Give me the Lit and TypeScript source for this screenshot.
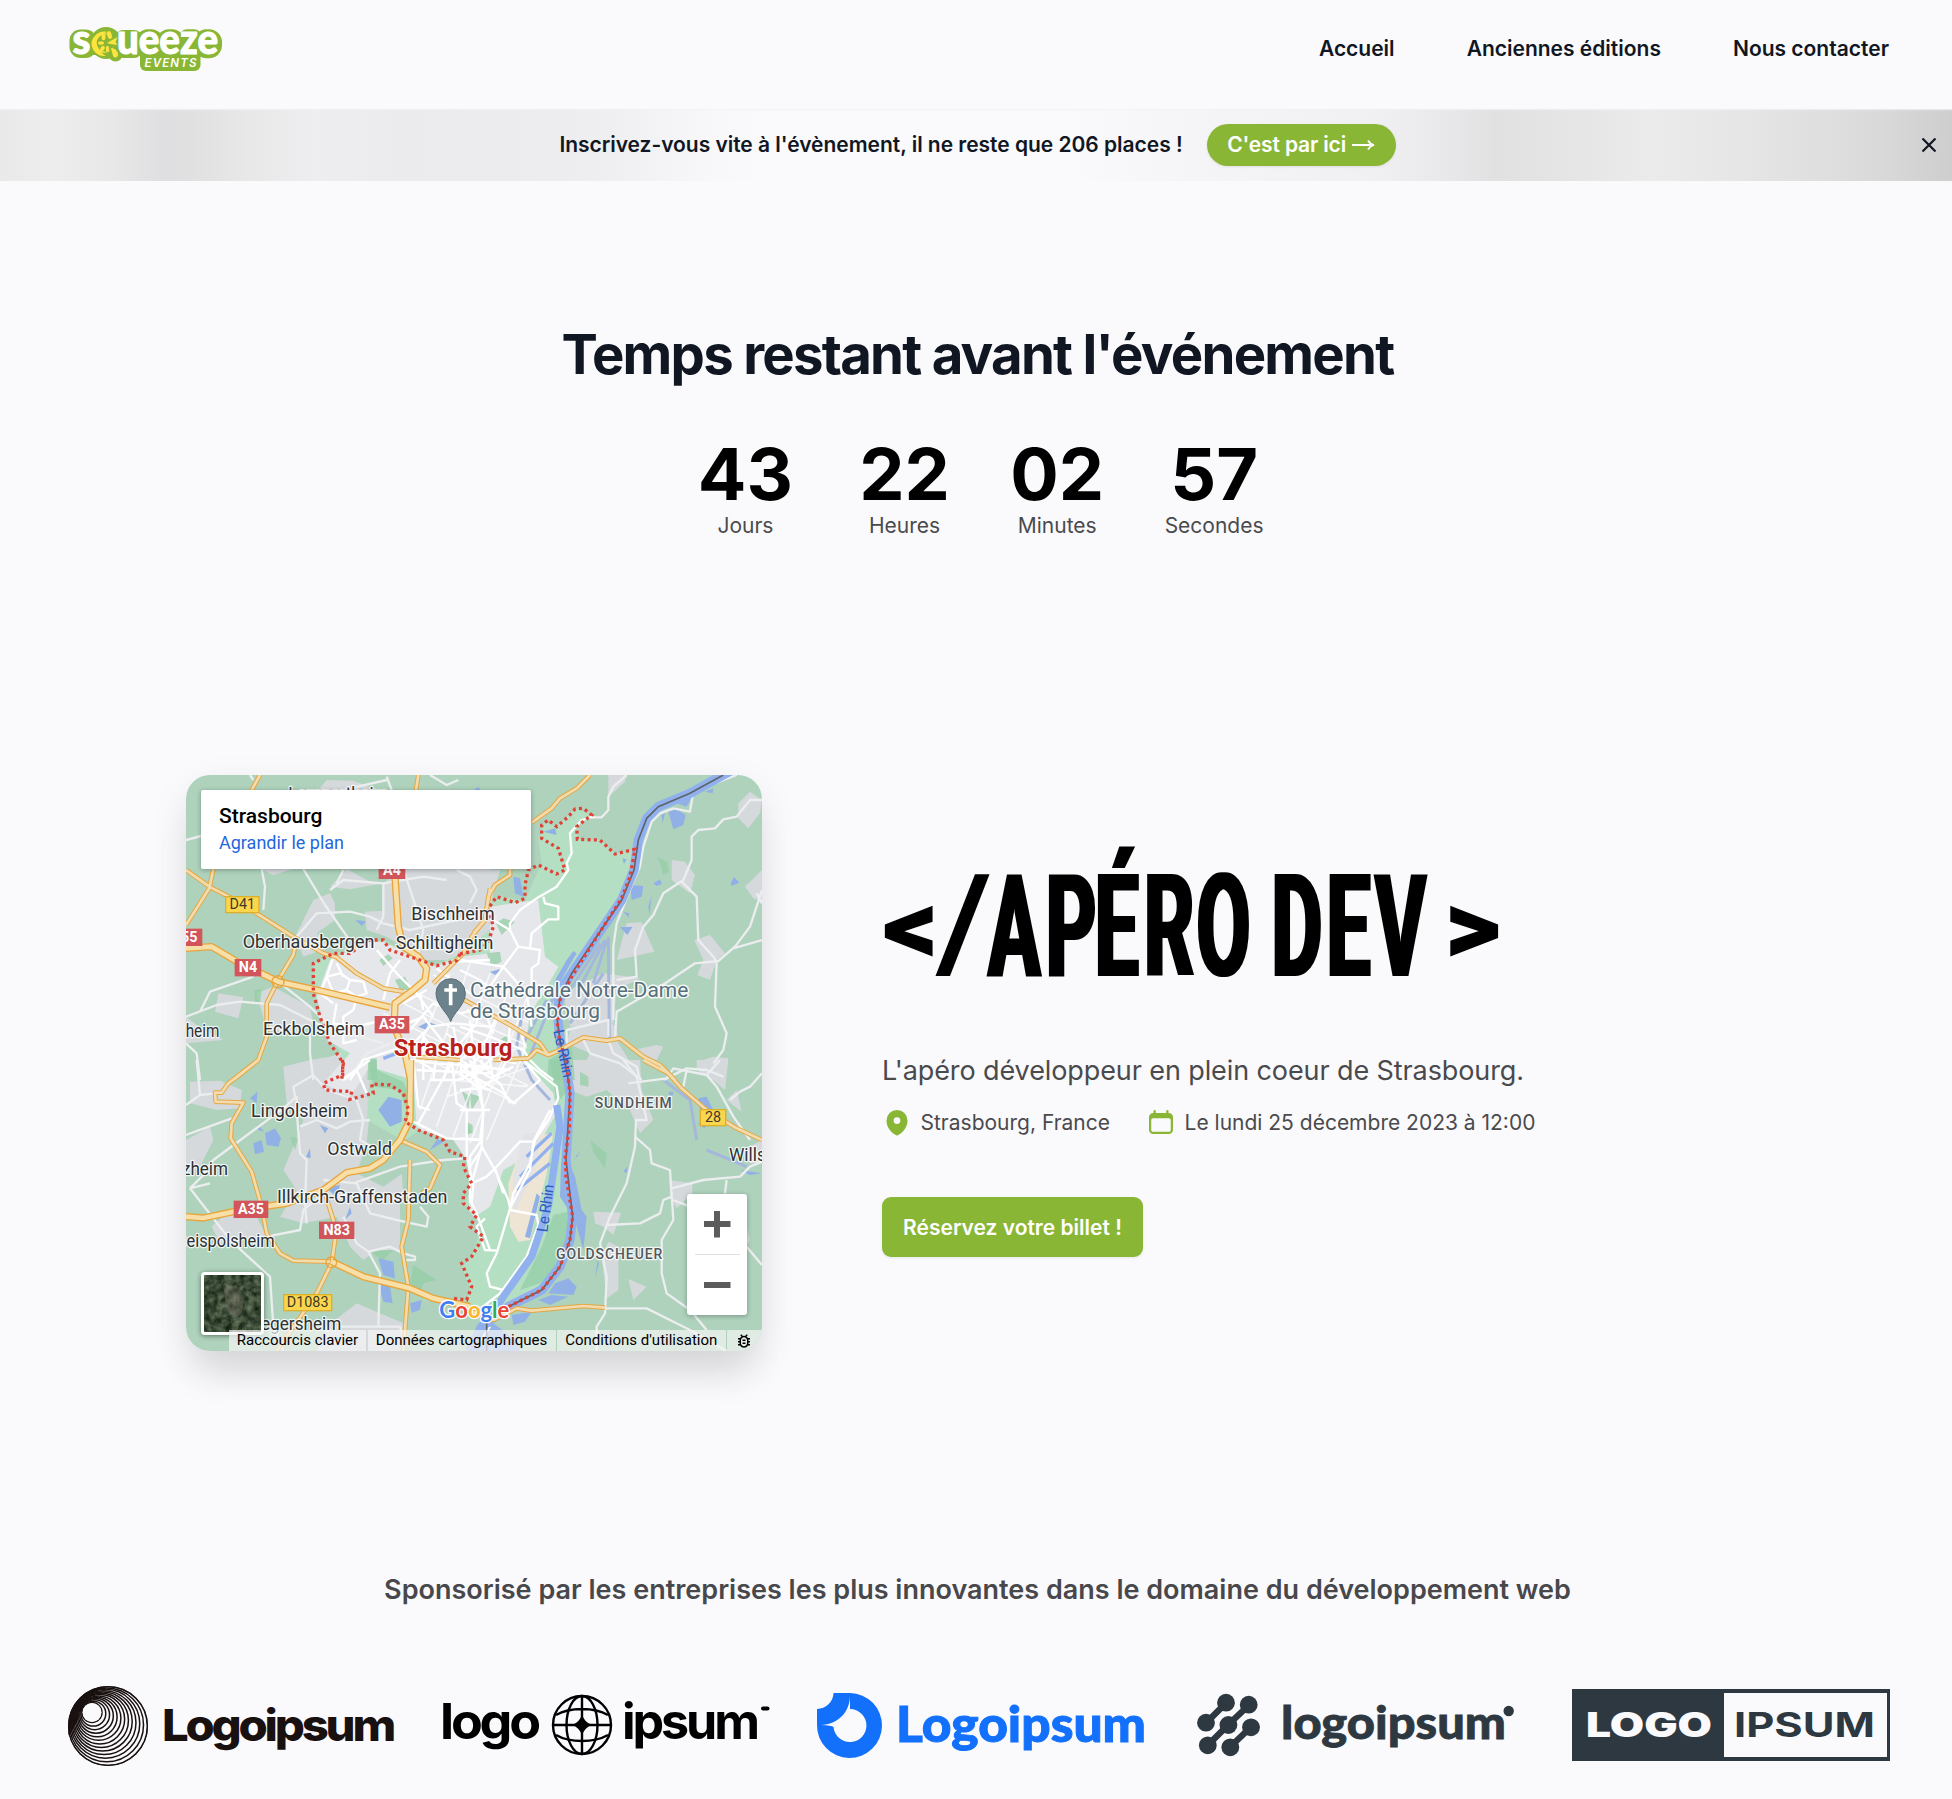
import { LitElement, html, svg, css } from "lit";
import { customElement } from "lit/decorators.js";

type Quad = [string, string, string, string];

const paths = (cls: string, [tl, tr, bl, br]: Quad) => svg`
  <path class=${cls} d=${tl}></path>
  <path class=${cls} transform="translate(870 0)" d=${tr}></path>
  <path class=${cls} transform="translate(0 900)" d=${bl}></path>
  <path class=${cls} transform="translate(870 900)" d=${br}></path>`;

const TOWN: Quad = [
  "M640,370L700,327L960,327L960,560L860,600L770,600L700,560L650,530L590,510L585,455L640,452Z M375,530L430,420L480,400L495,430L495,480L440,520L480,560L400,590Z M480,380L530,327L600,365L640,370L540,388Z M270,327L370,327L310,345Z M440,95L470,60L550,62L620,90Z M48,770L80,795L160,840L48,850Z M260,700L310,680L420,740L430,790L390,820L290,810Z M145,700L220,712L205,775L135,755Z M380,960L420,900L480,890L560,860L620,850L720,880L720,960Z",
  "M0,327L120,330L100,400L75,520L0,590Z M635,300L675,305L705,345L690,400L635,360Z M835,130L870,95L906,120L900,160L865,205L835,175Z M855,380L906,330L906,425L880,415Z M470,600L500,490L545,487L583,575Z M703,540L750,525L795,580L770,600L750,660L712,645L730,600Z M445,45L500,45L495,65L445,110Z M330,810L440,780L470,800L475,850L545,960L350,960L390,880L320,850Z M710,905L760,890L805,895L790,955L740,940Z M520,870L590,855L610,860L590,900L550,890Z M310,700L430,640L540,655L470,690L460,790L330,800Z",
  "M340,20L420,0L720,0L720,100L640,80L600,150L590,250L560,340L640,380L770,290L780,310L720,360L690,420L690,570L620,570L580,600L540,560L500,470L400,490L330,470L380,390L340,330L370,260L400,180L350,130Z M60,65L150,62L215,90L210,145L140,150L60,130Z M48,240L120,200L130,240L90,320L48,340Z M125,500L180,450L260,470L290,530L150,550Z M470,800L560,730L700,790L690,873L440,873Z",
  "M290,0L540,0L545,90L580,180L540,220L510,150L440,90L380,110L330,90Z M710,0L805,0L795,90L760,60L740,50L710,30Z M830,90L845,155L800,120Z M628,360L697,370L697,400L650,445L630,410Z M400,455L484,458L460,525L430,500L405,490Z M445,545L475,560L475,690L440,715L425,590Z M505,657L560,680L520,720Z M850,270L906,240L906,310L870,310Z M860,500L870,540L860,560Z",
];

const WOODS: Quad = [
  "M628,600L655,583L668,595L640,618Z M675,660L705,650L725,690L690,690Z M595,895L620,895L622,960L592,960Z M253,690L275,688L270,735L255,730Z",
  "M592,290L620,305L628,335L608,345L604,320Z M108,490L130,475L165,485L125,525Z M80,580L120,575L125,605L95,620Z M265,900L335,860L345,960L262,960Z M120,840L140,825L150,850L125,855Z",
  "M595,0L620,0L620,30L700,65L720,110L705,140L690,90L610,80Z M730,615L800,660L760,670L750,710L720,670Z M600,575L670,570L640,600Z M360,230L385,235L375,270Z M875,92L900,110L895,150Z M890,185L905,220L890,225Z",
  "M270,0L320,0L325,90L290,130Z M280,465L325,455L325,540L300,620L240,670L180,690L245,560Z M390,240L440,280L435,325L400,275Z M360,35L385,50L385,80L360,75Z M30,100L60,110L35,150Z M20,185L38,195L38,220L20,215Z",
];

const WATER: Quad = [
  "M555,480L588,484L575,497Z M745,800L775,785L800,795L770,810Z M905,95L925,80L935,95Z",
  "M625,155L650,148L677,165L670,195L640,208Z M510,375L550,378L545,410L515,420Z M580,370L600,358L605,372L590,378Z M812,370L822,350L838,368L815,378Z M487,295L500,298L492,312Z M480,502L518,500L502,525Z M575,405L568,465L565,440Z M160,350L180,355L190,410L165,400Z M90,635L130,625L105,645Z M250,215L285,205L290,225Z M665,110L710,85L680,140L650,130Z M735,95L760,85L758,100Z M320,600L340,573L350,580L300,665L280,670Z M490,455L508,460L505,472Z M605,165L615,160L608,190Z",
  "M625,150L655,110L695,120L695,185L660,200Z M285,220L315,205L333,235L325,260L290,255Z M250,250L275,240L282,275L255,283Z M240,115L262,95L260,130Z M450,195L475,205L465,220Z M408,290L420,265L422,295Z M625,595L670,605L675,655L640,645Z M625,665L660,680L668,730L640,725Z M720,730L755,720L750,750L725,758Z M780,270L800,240L830,240Z M262,190L282,215L265,210Z M480,380L510,375L500,410L475,390Z M540,440L545,460L525,480Z",
  "M715,115L740,110L760,150L720,150Z M712,190L740,190L735,205Z M628,95L640,95L638,107L626,105Z M285,670L325,655L350,680L340,705L265,700Z M235,720L275,705L325,710L270,735Z M155,765L215,755L195,785L160,795Z M303,310L315,280L345,350L365,450L380,470L370,570L345,480L300,410Z M405,655L413,600L417,610Z M345,292L360,275L352,290Z M490,335L503,318L500,338Z M100,790L180,850L180,873L30,873L60,790Z M195,530L230,400L240,410L210,535Z M840,330L906,340L870,345Z",
];

const MINOR: Quad = [
  "M48,240L93,228 M240,45L250,60 M275,327L285,380L280,450 M400,327L465,435L535,535 M380,530L440,460L540,455L600,470L640,490 M640,370L520,360L480,390 M640,370L640,470L620,510 M48,770L140,735L210,725L330,735L440,790L640,850 M90,755L120,695L250,650 M325,665L420,740L480,800L560,830 M48,850L80,880L90,960 M420,800L420,880L430,960 M530,960L590,880L660,850 M640,370L760,350L830,360 M640,490L720,510L860,480L960,460 M860,330L900,350L920,390L900,430 M700,327L760,510L740,600 M520,330L500,370 M650,60L540,85 M650,50L665,90 M865,60L830,75L780,45",
  "M500,45L460,80L445,110L445,150L425,172L395,172 M830,45L700,95L690,155L640,145L600,160L575,185L550,260L540,320L510,390L470,490L460,560L460,780 M906,120L870,120L830,170L790,178L765,205L715,210L695,230L695,300L670,360L610,400L580,465L550,500L525,570L530,650L470,660 M665,365L710,410L715,540L760,590L770,605L765,740L800,820L790,870L760,910 M906,390L870,500L825,560L775,603L705,610L600,680L470,755L465,830 M820,565L906,540 M445,830L445,780L320,810L320,860 M445,840L460,880L530,920L540,960 M370,840L390,880L480,910L545,960 M610,960L680,925L740,930L790,950 M906,430L890,400",
  "M80,0L90,105L135,100 M48,135L90,105 M48,225L185,175 M60,385L100,345L130,300L340,145L380,110L380,150L390,280L410,300L405,430L410,490 M370,80L430,45L470,90L560,120L580,180L570,240L640,280 M370,80L375,110 M390,200L440,180L500,205L540,185L600,180 M60,385L180,540L300,650L310,800L340,873 M290,530L390,510L400,450L430,425 M460,360L560,370L600,460L680,480L770,500L775,470L750,440 M520,470L560,550L595,575L630,640L625,800 M595,575L660,560L700,580L735,590L735,600L700,600 M550,370L690,320L820,300L890,295 M500,800L690,800L705,850 M60,385L120,370",
  "M490,0L530,50L560,180L528,180L525,260L500,370L450,470L420,550L440,650L435,760L410,800L410,873 M505,70L620,55L640,25L740,45L770,80L820,170L870,240 M740,45L780,0 M810,120L840,95L870,80L906,40 M680,30L670,80 M525,230L570,270L575,310L630,330L640,480L605,540L605,640L620,700L690,750L740,810 M635,385L730,360L840,350L870,320L906,305 M440,495L540,490L600,460L610,420L635,410 M435,745L560,745L690,810L800,873 M800,360L795,400 M860,560L906,615 M690,750L700,700 M690,440L640,420",
];

const STREETS: Quad = [
  "M490,590L470,650L450,700L490,730 M470,650L510,640L540,660L530,690L490,700L470,650 M540,660L580,665L590,700L560,710L530,690 M500,610L520,650 M560,710L550,750L520,770L520,850L560,840 M500,730L490,790L560,800L640,780 M620,570L680,640L740,700L790,770 M640,720L660,640L690,600 M800,625L900,700 M855,605L960,600 M720,810L790,730L870,760L960,740 M720,860L780,800L850,790L960,800 M690,800L760,770L830,860 M760,960L760,830L800,880L790,960 M820,960L850,860L960,850 M720,900L800,910L960,920 M850,800L880,960 M900,780L920,960 M750,700L760,750 M540,960L580,900L700,860 M740,930L960,940 M700,730L770,690 M830,820L900,880L960,890",
  "M400,170L365,180L330,220L335,280L320,310L325,330L290,380L230,415L180,450L150,490L150,510L175,560L240,570L235,610L215,625L215,710 M250,410L255,430L295,440L295,478L265,478L215,520L210,565 M150,510L100,480 M0,600L130,620L200,700L215,800 M175,560L130,620L90,680 M0,630L60,660L110,700 M60,740L50,790L0,850 M110,770L80,840L0,900 M150,800L140,900L110,960 M0,800L90,830L190,870L210,900L240,930L280,960 M0,940L60,890L170,910 M20,750L80,770L100,820 M30,960L90,900L160,850 M180,800L195,860",
  "M515,60L600,0 M730,0L745,140L780,150 M745,190L850,0 M730,185L830,235L930,240 M845,0L860,130L890,150L960,150 M780,60L860,60L960,20 M890,150L890,290L910,370L905,430L920,460L960,570 M930,240L940,160L930,70L860,0 M940,260L900,320 M520,60L560,30L590,100 M740,0L790,30 M870,40L920,80L960,90",
  "M0,30L60,60L130,100L160,130L240,60L190,0 M0,90L60,85L100,60L90,0 M30,0L50,70L70,150L65,260L105,330L145,420L150,445L110,580L80,640L90,680L130,690 M0,150L70,150 M0,235L65,240L30,290L30,430 M65,260L35,370L80,350L105,325L180,245L220,245L270,150 M105,325L130,400 M220,245L210,330L150,445 M190,0L290,80L295,115L265,180L225,240L210,310L160,400L150,450L230,465L235,495L200,590L120,700L30,770 M40,873L90,800 M75,475L50,500L75,570L110,572 M0,0L120,70L150,130 M0,60L60,20L150,30 M60,0L100,50L160,20",
];

const ROADS: Quad = [
  "M270,45L245,90 M130,327L118,385L48,495 M48,330L118,380L180,412L260,460L370,530L460,580L500,592L560,640L640,685L700,695 M375,560L370,585L325,660L290,730L290,830L265,900L190,960 M745,45L738,90 M960,385L945,480L905,530L880,580L790,670 M740,890L870,900",
  "M150,327L150,345L105,375L85,410L75,480L40,520 M390,45L350,85L300,115L275,145L215,188 M10,718L150,795L240,850L265,885L230,870L205,895L100,900 M265,885L300,870L370,832L440,842L480,835L550,890L600,915L645,960",
  "M265,0L175,70L155,98L135,98L137,125L220,128L185,190L182,235L245,335L275,440L290,520L330,580L370,602L480,605 M460,385L490,480L495,540L485,610L440,700L320,873 M690,240L770,275L810,315L780,385L755,400 M720,300L715,480L695,560L715,680L700,873",
  "M550,0L625,40L665,85L740,150L830,205L906,240 M0,740L100,780L170,745L215,752L370,738L435,743",
];

const MOTORWAYS: Quad = [
  "M48,565L125,560L210,610L325,665L440,690L660,742 M675,350L685,500L700,560L745,590L770,625L765,660L730,690L675,730L672,800L705,880L722,960",
  "",
  "M722,0L720,180L690,240L640,300L600,325L530,338L460,390L350,430L245,445L190,455L100,474L48,470 M485,605L580,650L720,685L790,715L900,740",
  "",
];

const BORDER: Quad = [
  "M870,582L860,602L800,617L720,590L660,570L640,540L600,540L540,580L490,580L430,610L430,700L450,770L480,850L520,910L515,960",
  "M0,582L60,570L85,545L100,500L85,445L110,410L165,428L195,415L195,375L205,330L235,315L290,342L315,330L295,265L245,235L245,195L265,180L290,200L325,170L345,147L370,145L395,165L350,200L352,238L420,240L465,282L525,268L510,350L485,415L430,500L335,650L300,720L292,790L300,850L320,900L325,960",
  "M518,0L518,45L460,70L465,90L545,95L540,118L610,100L605,72L660,75L700,100L715,150L705,185L745,210L820,240L840,275L885,290L880,320L905,370L880,400L880,430L920,465L900,500L940,530L905,590L875,610L905,680L890,720L850,715",
  "M325,60L330,100L328,200L316,290L318,350L338,470L330,540L300,620L245,690L145,740",
];

const label = (x: number, y: number, w: number, text: string, cls = "town-name") =>
  svg`<text class=${cls} x=${x} y=${y} textLength=${w} lengthAdjust="spacingAndGlyphs">${text}</text>`;

const shield = (x: number, y: number, w: number, text: string, kind: string) => svg`
  <rect class=${"shield " + kind} x=${x} y=${y} width=${w} height="48"></rect>
  <text class=${"shield-text " + kind} x=${x + w / 2} y=${y + 38}>${text}</text>`;

@customElement("event-map")
class EventMap extends LitElement {
  static styles = css`
    :host { display: block; }
    .map { position: relative; width: 576px; height: 576px; border-radius: 24px; font-family: Roboto, sans-serif;
      box-shadow: 0 30px 38px -8px rgba(0,0,0,.1), 0 12px 40px rgba(0,0,0,.07); }
    .clip { position: absolute; inset: 0; border-radius: 24px; overflow: hidden; background: #aed2bc; }
    svg { display: block; }
    .town { fill: #d5d9dc; }
    .woods { fill: #94cea7; opacity: .75; }
    .water { fill: #91b1e6; }
    .minor { fill: none; stroke: #ebedef; stroke-width: 7; stroke-linejoin: round; }
    .street { fill: none; stroke: #fff; stroke-width: 7; stroke-linejoin: round; }
    .case { fill: none; stroke: #e5a742; stroke-width: 14; stroke-linejoin: round; }
    .road { fill: none; stroke: #f2dcae; stroke-width: 8; stroke-linejoin: round; }
    .mcase { fill: none; stroke: #e8a53b; stroke-width: 22; stroke-linejoin: round; }
    .motor { fill: none; stroke: #f8dfa8; stroke-width: 14; stroke-linejoin: round; }
    .border { fill: none; stroke: #df4338; stroke-width: 10; stroke-dasharray: 9 10; }
    .river { fill: none; stroke: #91b1ee; stroke-width: 28; stroke-linejoin: round; }
    .country { fill: none; stroke: #5e6469; stroke-width: 5; }
    .grid { fill: none; stroke: #fff; stroke-width: 5; opacity: .7; }
    text { font-family: Roboto, sans-serif; paint-order: stroke; stroke-linejoin: round; }
    .town-name { font-size: 55px; fill: #2d3134; stroke: rgba(255,255,255,.8); stroke-width: 8; }
    .big { font-size: 69px; font-weight: 700; fill: #b9211b; stroke: rgba(255,255,255,.9); stroke-width: 8; }
    .poi { font-size: 61px; fill: #566f7b; stroke: rgba(255,255,255,.9); stroke-width: 9; }
    .district { font-size: 44px; font-weight: 500; fill: #53585c; stroke: rgba(255,255,255,.85); stroke-width: 8; letter-spacing: 3px; }
    .rhin { font-size: 46px; fill: #2b5cc0; }
    .shield { stroke-width: 4; }
    .shield.red { fill: #d1555a; stroke: #d1555a; }
    .shield.yellow { fill: #fbd64c; stroke: #ddb02c; }
    .shield-text { font-size: 43px; text-anchor: middle; }
    .shield-text.red { fill: #fff; font-weight: 700; }
    .shield-text.yellow { fill: #3d3a2a; font-weight: 400; }
    .google { font-family: Lato, sans-serif; font-size: 70px; font-weight: 700; stroke: #fff; stroke-width: 8; }
    .b { fill: #3f7ff0; } .r { fill: #e84335; } .y { fill: #fbb428; } .g { fill: #35a853; }
    .card { position: absolute; left: 15px; top: 15px; width: 330px; height: 79px; box-sizing: border-box; padding: 13px 18px;
      background: #fff; border-radius: 2px; box-shadow: 0 1px 5px rgba(0,0,0,.3); }
    .place { font-size: 21px; line-height: 26px; font-weight: 500; color: #000; }
    .link { font-size: 18px; line-height: 27px; color: #1f67dc; }
    .zoom { position: absolute; left: 501px; top: 419px; width: 60px; height: 121px; background: #fff; border-radius: 3px;
      box-shadow: 0 1px 5px rgba(0,0,0,.3); }
    .thumb { position: absolute; left: 15px; top: 497px; width: 57px; height: 57px; border: 3px solid #fff; border-radius: 4px;
      overflow: hidden; box-shadow: 0 1px 5px rgba(0,0,0,.45); }
    .legal { position: absolute; left: 43px; right: 0; bottom: 0; height: 21px; display: flex; gap: 1.5px; font-size: 15px;
      line-height: 21px; color: #000; }
    .legal span { background: rgba(245,245,245,.7); display: flex; justify-content: center; align-items: center; white-space: nowrap; }
    .l1 { width: 137px; } .l2 { width: 188px; } .l3 { width: 168.5px; } .l4 { flex: 1; padding-right: 2px; }
  `;

  render() {
    return html`
      <div class="map"><div class="clip">
        <svg width="576" height="576" viewBox="48 45 1728 1728">
          <defs>
            <clipPath id="core"><path d="M620,740L700,700L830,620L960,600L1000,650L1080,720L1070,860L1110,920L1010,1080L940,1200L700,1080L720,900Z"></path></clipPath>
          </defs>
          ${paths("town", TOWN)}
          <path fill="#b4dfc2" d="M1115,310L1105,240L1125,185L1160,200L1215,145L1265,165L1225,200L1222,238L1290,240L1335,282L1395,268L1380,350L1300,500L1170,720L1165,800L1195,960L1200,1100L1188,1200L1208,1370L1190,1480L1110,1590L1010,1640L900,1640L760,1620L775,1580L745,1510L810,1430L770,1400L790,1370L750,1330L755,1190L715,1150L590,1080L600,940L520,900L430,700L430,610L490,580L640,540L790,617L870,582L970,500L955,445L980,410L1065,420Z"></path>
          <path fill="#e6e7eb" d="M480,600L600,545L640,545L790,620L870,590L960,580L960,440L1060,425L1105,420L1125,590L1165,620L1120,700L1080,760L1060,900L1150,1000L1160,1060L1090,1180L1000,1230L960,1340L900,1380L890,1210L740,1100L730,960L600,920L540,1010L460,970L540,880L470,840L440,710Z"></path>
          <path fill="#aed2bc" d="M750,1110L850,1140L890,1200L905,1290L880,1330L935,1400L905,1490L875,1520L905,1600L860,1640L720,1600L700,1320L690,1150Z"></path>
          <path fill="#eee5d5" d="M1150,1120L1060,1130L1040,1200L1015,1270L1020,1400L1045,1445L1080,1440L1110,1320L1130,1240Z"></path>
          <path fill="#e1e3e7" d="M1060,1125L1110,1115L1100,1210L1030,1370L1030,1250Z"></path>
          ${paths("woods", WOODS)}
          ${paths("water", WATER)}
          <g fill="none" stroke="#a5b8dc" stroke-width="9">
            <path d="M1305,540L1230,680 M1310,540L1270,670 M1290,550L1180,720 M1315,530L1318,840 M1300,640L1200,790 M1060,740L1040,860L1085,960L1140,1020 M1130,720L1060,850 M1155,700L1075,900 M1480,960L1560,1020L1580,1140 M1610,1170L1730,1220"></path>
          </g>
          <path fill="none" stroke="#91b1ee" stroke-width="10" d="M1145,1120L1070,1190 M1150,1150L1050,1250 M1140,1210L1040,1290 M640,895L680,880"></path>
          ${paths("minor", MINOR)}
          <g clip-path="url(#core)"><path class="grid" d="M640,700L1120,940 M640,760L1120,1000 M640,830L1080,1050 M700,680L1120,880 M780,640L1120,810 M690,1000L840,640 M750,1050L900,610 M800,1100L960,640 M850,1130L1030,650 M900,1150L1080,690 M950,1140L1110,760 M860,900L1080,860 M840,960L1080,980 M830,1010L1080,920"></path></g>
          ${paths("street", STREETS)}
          <path class="river" d="M1690,28L1560,100L1465,140L1430,175L1405,240L1392,330L1355,420L1300,500L1205,640L1170,690L1162,760L1170,840L1185,900L1200,1000L1188,1200L1208,1370L1200,1440L1170,1520L1115,1590L1015,1640L935,1700L900,1773"></path>
          <path fill="none" stroke="#91b1ee" stroke-width="22" stroke-linejoin="round" d="M1160,1035L1170,1100L1135,1340L1085,1490L1000,1610L950,1690"></path>
          <path class="country" d="M1660,45L1560,100L1465,140L1430,175L1405,240L1392,330L1355,420L1300,500L1205,640L1170,710L1162,780L1170,840L1195,960L1200,1000L1188,1200L1208,1370L1200,1440L1170,1520L1115,1590L1015,1640 M950,1690L950,1773"></path>
          ${paths("case", ROADS)}${paths("road", ROADS)}
          ${paths("mcase", MOTORWAYS)}${paths("motor", MOTORWAYS)}
          <path fill="none" stroke="#e8a53b" stroke-width="4" d="M306,665a18,18 0 1 0 36,0a18,18 0 1 0-36,0 M468,1507a16,16 0 1 0 32,0a16,16 0 1 0-32,0"></path>
          ${paths("border", BORDER)}
          ${label(355, 120, 300, "Lampertheim")}
          ${shield(628, 307, 76, "A4", "red")}
          ${shield(167, 410, 100, "D41", "yellow")}
          ${shield(20, 508, 75, "55", "red")}
          ${shield(196, 599, 76, "N4", "red")}
          ${shield(616, 770, 100, "A35", "red")}
          ${shield(193, 1324, 100, "A35", "red")}
          ${shield(449, 1387, 102, "N83", "red")}
          ${shield(341, 1604, 144, "D1083", "yellow")}
          ${shield(1591, 1049, 76, "28", "yellow")}
          ${label(724, 480, 250, "Bischheim")}
          ${label(218, 564, 395, "Oberhausbergen")}
          ${label(677, 568, 293, "Schiltigheim")}
          ${label(279, 824, 305, "Eckbolsheim")}
          ${label(-45, 831, 193, "Ittenheim")}
          ${label(243, 1071, 290, "Lingolsheim")}
          ${label(472, 1185, 194, "Ostwald")}
          ${label(-6, 1246, 180, "olzheim")}
          ${label(321, 1328, 511, "Illkirch-Graffenstaden")}
          ${label(16, 1460, 298, "Geispolsheim")}
          ${label(245, 1711, 269, "Fegersheim")}
          ${label(1677, 1202, 190, "Willstätt")}
          ${label(1274, 1043, 234, "SUNDHEIM", "district")}
          ${label(1158, 1496, 322, "GOLDSCHEUER", "district")}
          <text class="rhin" transform="translate(1150 812) rotate(78)" textLength="146">Le Rhin</text>
          <text class="rhin" transform="translate(1132 1418) rotate(-82)" textLength="144">Le Rhin</text>
          <path d="M842,785C835,760 798,735 798,700a44,44 0 0 1 88,0C886,735 849,760 842,785Z" fill="#6c828d" stroke="#566b75" stroke-width="3"></path>
          <path d="M842,672v64M823,690h38" stroke="#fff" stroke-width="11" fill="none"></path>
          ${label(900, 712, 655, "Cathédrale Notre-Dame", "poi")}
          ${label(900, 775, 390, "de Strasbourg", "poi")}
          ${label(671, 888, 356, "Strasbourg", "big")}
          <text class="google" x="808" y="1675" textLength="210" lengthAdjust="spacingAndGlyphs"><tspan class="b">G</tspan><tspan class="r">o</tspan><tspan class="y">o</tspan><tspan class="b">g</tspan><tspan class="g">l</tspan><tspan class="r">e</tspan></text>
        </svg>
        <div class="card"><div class="place">Strasbourg</div><div class="link">Agrandir le plan</div></div>
        <div class="thumb">
          <svg width="57" height="57" viewBox="0 0 57 57">
            <defs><filter id="t" x="0" y="0" width="1" height="1" color-interpolation-filters="sRGB"><feTurbulence type="fractalNoise" baseFrequency=".14" numOctaves="4" seed="4"></feTurbulence>
              <feColorMatrix values=".5 .2 0 0 -.12  .5 .2 0 0 -.06  .45 .15 0 0 -.09  0 0 0 0 1"></feColorMatrix></filter></defs>
            <rect width="57" height="57" filter="url(#t)"></rect>
            <path d="M20,14l12-4 8,12-2,16-8,6-8-12z" fill="#8a7d72" opacity=".35"></path>
          </svg>
        </div>
        <div class="zoom"><svg width="60" height="121" viewBox="0 0 60 121"><path d="M17,30h26.5M30,17v26.5M17,91h26.5" stroke="#5c5c5c" stroke-width="6"></path><path d="M8,60.5h45" stroke="#e2e2e2" stroke-width="1"></path></svg></div>
        <div class="legal"><span class="l1">Raccourcis clavier</span><span class="l2">Données cartographiques</span><span class="l3">Conditions d'utilisation</span><span class="l4">
          <svg width="18" height="18" viewBox="0 0 24 24"><path fill="#000" d="M20 8h-2.81a5.985 5.985 0 0 0-1.82-1.96L17 4.41 15.59 3l-2.17 2.17a6.002 6.002 0 0 0-2.83 0L8.41 3 7 4.41l1.62 1.63C7.88 6.55 7.26 7.22 6.81 8H4v2h2.09c-.05.33-.09.66-.09 1v1H4v2h2v1c0 .34.04.67.09 1H4v2h2.81c1.04 1.79 2.97 3 5.19 3s4.15-1.21 5.19-3H20v-2h-2.09c.05-.33.09-.66.09-1v-1h2v-2h-2v-1c0-.34-.04-.67-.09-1H20V8zm-4 7c0 2.21-1.79 4-4 4s-4-1.790-4-4v-4c0-2.210 1.790-4 4-4s4 1.790 4 4v4zm-6-1h4v2h-4zm0-4h4v2h-4z"></path></svg></span></div>
      </div></div>`;
  }
}

const NAV = ["Accueil", "Anciennes éditions", "Nous contacter"];
const COUNTDOWN = [
  { value: "43", unit: "Jours", cls: "c1" },
  { value: "22", unit: "Heures", cls: "c2" },
  { value: "02", unit: "Minutes", cls: "c3" },
  { value: "57", unit: "Secondes", cls: "c4" },
];

const RINGS = Array.from({ length: 13 }, (_, i) => {
  const t = i / 12;
  return { r: 10 + t * 29.3, x: 24 + t * 16, y: 26.5 + t * 13.5 };
});

@customElement("app-root")
class AppRoot extends LitElement {
  static styles = css`
    :host { display: block; width: 1952px; height: 1799px; overflow: hidden; background: #fafafd; font-family: Inter, sans-serif;
      color: #111722; }
    svg { display: block; overflow: visible; }
    header { display: flex; justify-content: space-between; height: 109px; box-sizing: border-box; padding: 24px 63px 0 66px; }
    nav { display: flex; gap: 72px; padding-top: 1px; }
    nav a { font-size: 21px; line-height: 48px; font-weight: 600; height: 48px; }
    .banner { position: relative; display: flex; align-items: center; justify-content: center; gap: 24px; height: 72px; padding-left: 3px;
      box-sizing: border-box;
      background: linear-gradient(180deg, rgba(240,240,242,.9) 0, rgba(240,240,242,0) 2px),
        linear-gradient(90deg, #e9e9ea 0, #ededee 50px, #e8e8e9 110px, #dfdfe1 165px, #e1e1e2 195px, #e8e8e9 250px, #eeeef0 315px, #ebebed 400px, #ececee 520px, #efeff1 610px, #f7f7f9 700px, #fafafc 770px, #fafafd 1060px, #f5f5f8 1200px, #f0f0f2 1380px, #e9e9eb 1440px, #e1e1e2 1495px, #e5e5e6 1570px, #ebebec 1650px, #e6e6e7 1740px, #dededf 1830px, #d9d9da 1880px, #cecece 1952px); }
    .banner p { margin: 0 0 1px; font-size: 21px; font-weight: 600; letter-spacing: -.03px; }
    .pill { width: 189px; height: 42px; box-sizing: border-box; padding-bottom: 1px; border-radius: 21px; background: #8ab636; color: #fff; font-size: 21px; font-weight: 600;
      display: flex; align-items: center; justify-content: center; gap: 6px; letter-spacing: -.15px; box-shadow: 0 1px 3px rgba(0,0,0,.08); white-space: nowrap; }
    .close { position: absolute; right: 15px; top: 28px; }
    .count { height: 594px; box-sizing: border-box; padding-top: 143px; text-align: center; }
    h2 { margin: 0; font-size: 54.5px; line-height: 60px; letter-spacing: -1.75px; font-weight: 700; padding-left: 3px; }
    .clock { display: flex; justify-content: center; gap: 62px; padding: 54px 0 0 4px; }
    .clock div { display: flex; flex-direction: column; align-items: center; }
    .c1 { width: 105px; } .c2 { width: 89.4px; } .c3 { width: 91.8px; } .c4 { width: 98px; }
    .clock b { font-size: 72px; line-height: 72px; font-weight: 700; color: #000; }
    .clock span { font-size: 21px; line-height: 32px; color: #4a4a4d; }
    .event { display: flex; align-items: flex-start; padding-left: 186px; gap: 120px; height: 783px; }
    .info { padding-top: 70px; color: #4a4a4d; }
    .desc { margin: 65px 0 0; font-size: 27px; line-height: 42px; white-space: nowrap; letter-spacing: -.1px; }
    .meta { display: flex; align-items: center; margin-top: 10px; height: 40px; font-size: 21px; }
    .meta svg { margin-right: 8.5px; }
    .meta span { margin-right: 36px; }
    .cta { margin-top: 55px; width: 261px; height: 60px; border-radius: 9px; background: #8ab636; color: #fff; font-size: 21px;
      font-weight: 600; display: flex; align-items: center; justify-content: center; box-shadow: 0 1px 3px rgba(0,0,0,.08); }
    h3 { margin: 0; padding-left: 3px; font-size: 27px; line-height: 42px; height: 43px; padding-top: 11px; font-weight: 600; text-align: center; color: #48484c; }
    .logos { display: flex; justify-content: space-between; padding: 74px 62px 0 68px; }
    .brand { font-family: Roboto, Inter, sans-serif; font-weight: 700; }
    .chevron { font-weight: 800; }
    .inter { font-family: Inter, sans-serif; }
    .tight { letter-spacing: -3px; }
    .lato { font-family: Lato, sans-serif; font-weight: 900; }
  `;

  render() {
    return html`
      <header>
        <svg width="160" height="52" viewBox="66 24 160 52">
          <g fill="#8ab636">
            <rect x="140" y="48" width="60.500" height="23" rx="6"></rect>
            <rect x="69.500" y="29.500" width="27" height="28.500" rx="11"></rect>
            <rect x="84" y="33" width="120" height="22"></rect>
            <circle cx="106" cy="43" r="16"></circle><circle cx="115.500" cy="54.500" r="7"></circle>
            <rect x="115" y="30" width="27" height="28" rx="8"></rect>
            <rect x="135" y="29.300" width="29" height="29" rx="13"></rect>
            <rect x="156" y="29.300" width="29" height="29" rx="13"></rect>
            <rect x="179" y="29.300" width="23" height="29" rx="8"></rect>
            <rect x="193.500" y="29.300" width="28.500" height="29" rx="13"></rect>
          </g>
          <g fill="#fff" stroke="#fff" stroke-width="1" stroke-linejoin="round" class="lato" font-size="41">
            <text x="72.500" y="54" textLength="18" lengthAdjust="spacingAndGlyphs">s</text>
            <text x="117" y="54" textLength="101" lengthAdjust="spacingAndGlyphs">ueeze</text>
          </g>
          <path d="M107,32C99,30 96,35 93,38L91.500,42C91,50 97,57 106,56C101,53 97,48 98,42C98,37 102,34 107,32Z" fill="#fde33f"></path>
          <circle cx="104" cy="43" r="10" fill="#fde33f"></circle>
          <circle cx="105.500" cy="43" r="8.800" fill="#8ab636"></circle>
          <g fill="#fde33f"><ellipse cx="103.500" cy="37" rx="2" ry="3.300"></ellipse><ellipse cx="109.500" cy="35" rx="2.200" ry="4" transform="rotate(-15 109.500 35)"></ellipse><ellipse cx="101" cy="43" rx="3" ry="1.800"></ellipse><ellipse cx="102.500" cy="48.500" rx="2" ry="2.800" transform="rotate(30 102.500 48.500)"></ellipse><ellipse cx="107.500" cy="49" rx="1.700" ry="3"></ellipse><path d="M107,43L117.500,37L115.500,42L117.500,45L110,44Z"></path><path d="M111,48C114,48 117,50 118,54C118.500,57 115,59 113,56Z"></path></g>
          <text x="144.500" y="67" class="inter" font-size="11.500" font-weight="600" font-style="italic" fill="#fff" textLength="52">EVENTS</text>
        </svg>
        <nav>${NAV.map((n) => html`<a>${n}</a>`)}</nav>
      </header>
      <div class="banner">
        <p>Inscrivez-vous vite à l'évènement, il ne reste que 206 places !</p>
        <a class="pill">C'est par ici<svg width="23" height="12" viewBox="0 0 23 12"><path d="M0,6H21M16,1.500Q18,5 22,6Q18,7 16,10.500" fill="none" stroke="#fff" stroke-width="1.800"></path></svg></a>
        <svg class="close" width="16" height="16" viewBox="0 0 16 16"><path d="M1.500,1.500L14.500,14.500M14.500,1.500L1.500,14.500" stroke="#111722" stroke-width="2.200"></path></svg>
      </div>
      <section class="count">
        <h2>Temps restant avant l'événement</h2>
        <div class="clock">${COUNTDOWN.map((c) => html`<div class=${c.cls}><b>${c.value}</b><span>${c.unit}</span></div>`)}</div>
      </section>
      <section class="event">
        <event-map></event-map>
        <div class="info">
          <svg width="640" height="140" viewBox="882 845 640 140">
            <defs><filter id="wide" x="-5%" y="-5%" width="110%" height="110%"><feMorphology operator="dilate" radius="2 0"></feMorphology></filter></defs>
            <g fill="#000">
              <g class="brand chevron" font-size="104" stroke="#000" stroke-width="1.500">
                <text transform="translate(883 962) scale(1.04 .98)">&lt;</text>
                <text transform="translate(1445 962) scale(1.04 .98)">&gt;</text>
              </g>
              <path d="M935.500,976L975,874.300H989.500L950,976Z"></path>
              <g class="brand" font-size="143.500" filter="url(#wide)">
                <text transform="translate(0 976) scale(.54 1)" x="1830 1937 2028 2119 2216">APÉRO</text>
                <text transform="translate(0 976) scale(.54 1)" x="2355 2457 2547">DEV</text>
              </g>
            </g>
          </svg>
          <p class="desc">L'apéro développeur en plein coeur de Strasbourg.</p>
          <div class="meta">
            <svg width="30" height="30" viewBox="0 0 20 20"><path fill="#8ab636" fill-rule="evenodd" d="M9.690 18.933l.003.001C9.890 19.020 10 19 10 19s.110.020.308-.066l.002-.001.006-.003.018-.008a5.741 5.741 0 00.281-.140c.186-.096.446-.240.757-.433.620-.384 1.445-.966 2.274-1.765C15.302 14.988 17 12.493 17 9A7 7 0 103 9c0 3.492 1.698 5.988 3.355 7.584a13.731 13.731 0 002.273 1.765 11.842 11.842 0 00.976.544l.062.029.018.008.006.003zM10 11.250a2.250 2.250 0 100-4.500 2.250 2.250 0 000 4.500z"></path></svg>
            <span>Strasbourg, France</span>
            <svg width="30" height="30" viewBox="0 0 20 20"><path fill="#8ab636" fill-rule="evenodd" d="M5.750 2a.750.750 0 01.750.750V4h7V2.750a.750.750 0 011.500 0V4h.250A2.750 2.750 0 0118 6.750v8.500A2.750 2.750 0 0115.250 18H4.750A2.750 2.750 0 012 15.250v-8.500A2.750 2.750 0 014.750 4H5V2.750A.750.750 0 015.750 2zm-1 5.500c-.690 0-1.250.560-1.250 1.250v6.500c0 .690.560 1.250 1.250 1.250h10.500c.690 0 1.250-.560 1.250-1.250v-6.500c0-.690-.560-1.250-1.250-1.250H4.750z"></path></svg>
            <span>Le lundi 25 décembre 2023 à 12:00</span>
          </div>
          <a class="cta">Réservez votre billet !</a>
        </div>
      </section>
      <h3>Sponsorisé par les entreprises les plus innovantes dans le domaine du développement web</h3>
      <div class="logos">
        <svg width="330" height="82" viewBox="0 0 330 82">
          <circle cx="40" cy="40" r="40" fill="#191010"></circle>
          <g>${RINGS.slice().reverse().map((c) => svg`<circle cx=${c.x} cy=${c.y} r=${c.r} fill="#fafafd" stroke="#191010" stroke-width="1.500"></circle>`)}</g>
          <path d="M0.500,44C-1,20 14,3 37,0.500C30,3 22,10 17,17C10,26 4,36 0.500,50Z" fill="#191010"></path>
          <circle cx="24" cy="26.500" r="9.500" fill="#fafafd"></circle>
          <text class="inter tight" x="94" y="54.500" font-size="44" font-weight="800" fill="#191010" textLength="231" lengthAdjust="spacingAndGlyphs">Logoipsum</text>
        </svg>
        <svg width="330" height="82" viewBox="444 1686 330 82">
          <text class="inter tight" x="440" y="1739" font-size="49" font-weight="700" textLength="98" lengthAdjust="spacingAndGlyphs">logo</text>
          <text class="inter tight" x="622" y="1739" font-size="49" font-weight="700" textLength="135" lengthAdjust="spacingAndGlyphs">ipsum</text>
          <rect x="761" y="1706.500" width="8.500" height="4" rx="2"></rect>
          <g fill="none" stroke="#000" stroke-width="2.400"><circle cx="582" cy="1725" r="29"></circle><ellipse cx="582" cy="1725" rx="15.500" ry="29"></ellipse><path d="M582,1696V1754M553,1725H611M556,1715C570,1707 594,1707 608,1715M556,1735C570,1743 594,1743 608,1735"></path></g>
          <path d="M582,1714.500Q584.500,1722.500 592,1725Q584.500,1727.500 582,1735.500Q579.500,1727.500 572,1725Q579.500,1722.500 582,1714.500Z"></path>
        </svg>
        <svg width="330" height="82" viewBox="820 1686 330 82">
          <path fill="#1270fb" fill-rule="evenodd" d="M833.500,1693H850A32.500,32.500 0 1 1 817,1725V1709A16.500,16.500 0 0 0 833.500,1693ZM850,1695.500C850,1712 838,1724.500 821,1725Q832,1725.500 833.500,1727A16.500,16.500 0 1 0 850,1709Z"></path>
          <text class="lato" x="896" y="1741.500" font-size="50" fill="#1270fb" stroke="#1270fb" stroke-width="1" textLength="250" lengthAdjust="spacingAndGlyphs">Logoipsum</text>
        </svg>
        <svg width="330" height="82" viewBox="1196 1686 330 82">
          <g stroke="#2e3840" stroke-width="6.500"><path d="M1226,1703L1206,1723M1249,1705L1228,1725L1208,1745M1251,1727L1230,1747"></path></g>
          <g fill="#2e3840"><circle cx="1226" cy="1702.700" r="8.900"></circle><circle cx="1248.700" cy="1704.700" r="8.900"></circle><circle cx="1206" cy="1722.700" r="8.900"></circle><circle cx="1228.400" cy="1725" r="8.900"></circle><circle cx="1251" cy="1727.300" r="8.900"></circle><circle cx="1207.800" cy="1745.300" r="8.900"></circle><circle cx="1230.300" cy="1747.300" r="8.900"></circle><circle cx="1508.700" cy="1711" r="5.200"></circle></g>
          <text class="lato" x="1281" y="1739" font-size="46" fill="#2e3840" stroke="#2e3840" stroke-width=".8" textLength="225" lengthAdjust="spacingAndGlyphs">logoipsum</text>
        </svg>
        <svg width="318" height="82" viewBox="1572 1686 318 82">
          <rect x="1572" y="1689" width="318" height="72" fill="#2e3840"></rect>
          <rect x="1724" y="1693" width="163" height="64" fill="#fafafd"></rect>
          <text class="inter" x="1586" y="1737" font-size="33.500" font-weight="900" fill="#fafafd" textLength="126" lengthAdjust="spacingAndGlyphs">LOGO</text>
          <text class="inter" x="1734" y="1737" font-size="33.500" font-weight="700" fill="#2e3840" textLength="141" lengthAdjust="spacingAndGlyphs">IPSUM</text>
        </svg>
      </div>`;
  }
}
